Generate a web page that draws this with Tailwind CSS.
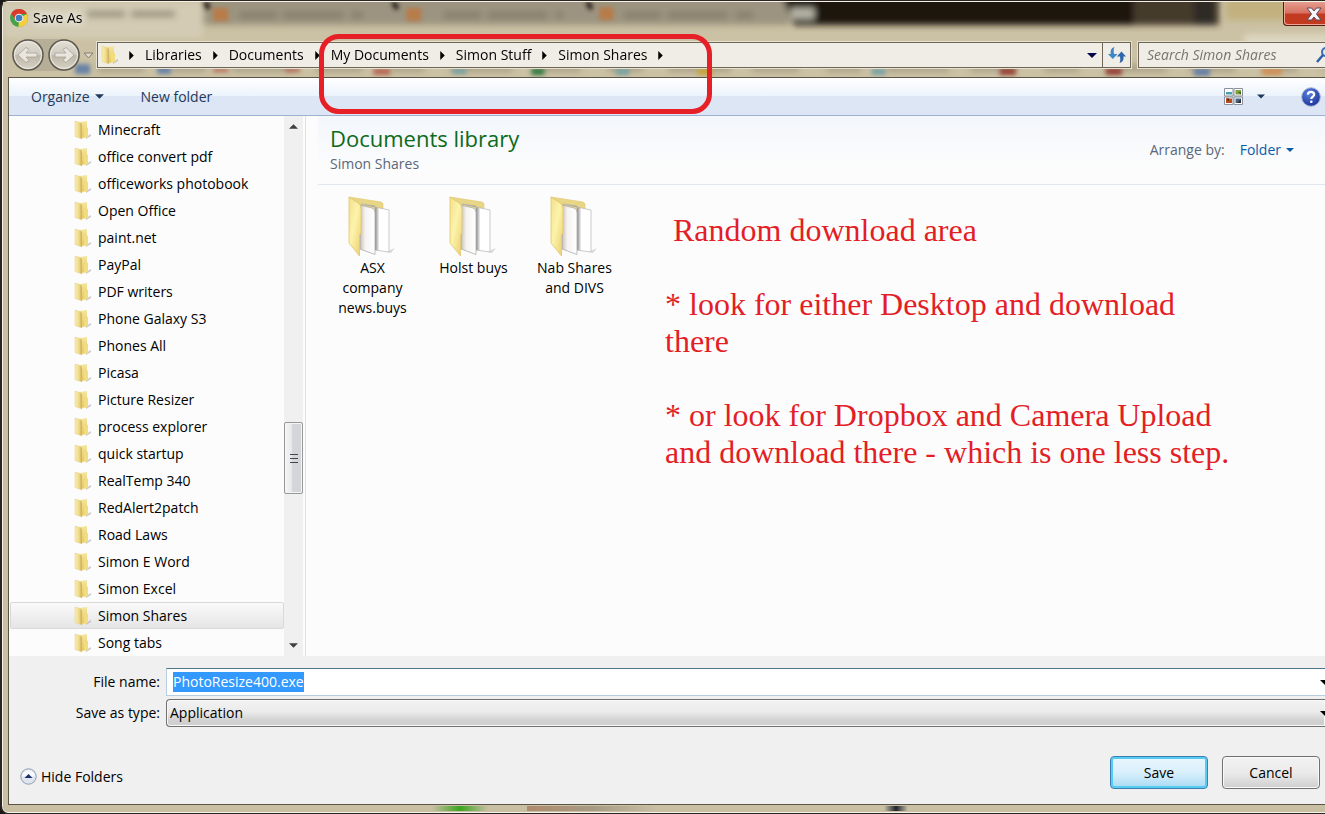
<!DOCTYPE html>
<html lang="en">
<head>
    <meta charset="UTF-8">
    <meta name="viewport" content="width=device-width, initial-scale=1.0">
    <title>Save As</title>
    <script src="https://cdn.jsdelivr.net/npm/@tailwindcss/browser@4"></script>
</head>
<body class="overflow-hidden bg-[#1b1815] font-['Open_Sans','Noto_Sans',sans-serif] text-sm text-black">

    <!-- Shared icons -->
    <svg class="absolute size-0" aria-hidden="true">
        <defs>
            <linearGradient id="fold-front" x1="0" y1="0" x2="1" y2="0">
                <stop offset="0" stop-color="#f9eeb0"/><stop offset=".6" stop-color="#eed989"/><stop offset="1" stop-color="#c3a54b"/>
            </linearGradient>
            <linearGradient id="fold-back" x1="0" y1="0" x2="0" y2="1">
                <stop offset="0" stop-color="#f4e6a0"/><stop offset="1" stop-color="#e6c85c"/>
            </linearGradient>
            <linearGradient id="big-front" x1="0" y1="0" x2="1" y2="1">
                <stop offset="0" stop-color="#f3e08c"/><stop offset=".45" stop-color="#fcf3ab"/><stop offset="1" stop-color="#ebcd6b"/>
            </linearGradient>
            <linearGradient id="paper" x1="0" y1="0" x2="1" y2="0">
                <stop offset="0" stop-color="#c9c0b4"/><stop offset=".35" stop-color="#f5f3f1"/><stop offset="1" stop-color="#fff"/>
            </linearGradient>
            <linearGradient id="paper-back" x1="0" y1="0" x2="1" y2="0">
                <stop offset=".48" stop-color="#777"/><stop offset=".66" stop-color="#fff"/>
            </linearGradient>
            <linearGradient id="nav" x1="0" y1="0" x2="0" y2="1">
                <stop offset="0" stop-color="#e4e0d6"/><stop offset=".5" stop-color="#cfcabf"/><stop offset=".52" stop-color="#bdb7a9"/><stop offset="1" stop-color="#d8d3c6"/>
            </linearGradient>
            <radialGradient id="help" cx=".4" cy=".3" r=".8">
                <stop offset="0" stop-color="#5b83e0"/><stop offset="1" stop-color="#142a90"/>
            </radialGradient>
            <filter id="blur" x="-5%" y="-30%" width="110%" height="160%"><feGaussianBlur stdDeviation="3"/></filter>
            <filter id="soft"><feGaussianBlur stdDeviation="2"/></filter>
        </defs>
        <symbol id="folder" viewBox="0 0 18 20">
            <path d="M12 17L17 14L17 16L12 19Z" fill="#aaa" opacity=".6"/>
            <path d="M6 2L13 1V17L6 18Z" fill="url(#fold-back)"/>
            <path d="M10 9L13 7.500L14 8V17L10 18Z" fill="#f3dc7d"/>
            <path d="M1 1L6 2.500Q8 3 8 5V19L1 16.500Z" fill="url(#fold-front)" stroke="#e5cf80" stroke-width=".5"/>
        </symbol>
        <symbol id="folder-open" viewBox="0 0 50 62">
            <path d="M38 56L47 52L43 57Z" fill="#999" opacity=".35"/>
            <path d="M1 1L33 6Q35 6.500 35 9V30H10Z" fill="#e9d685" stroke="#dcc46c" stroke-width=".6"/>
            <path d="M13 8L41 14V56L27 54V10Z" fill="url(#paper-back)" stroke="#b5b5b5" stroke-width=".7"/>
            <path d="M12 9L24 12Q27 13 27 17V58.500L12 53Z" fill="url(#paper)" stroke="#a5a5a5" stroke-width=".7"/>
            <path d="M1 1L10 7Q13 9 13 13V37L11.500 39V60L1 47Z" fill="url(#big-front)" stroke="#dfc66c" stroke-width=".8"/>
        </symbol>
        <symbol id="right" viewBox="0 0 5 10"><path d="M0 0V10L5 5Z"/></symbol>
        <symbol id="down" viewBox="0 0 10 5"><path d="M0 0H10L5 5Z"/></symbol>
    </svg>

    <div class="relative flex min-h-screen w-full flex-col rounded-l-lg border-y border-l-2 border-[#2b2620] bg-[#c9bfa3] pt-px pb-2 shadow-[inset_1px_1px_0_#f4f1ea,inset_0_-1px_0_#f4f1ea]">

        <!-- Blurred browser behind the glass frame -->
        <svg class="absolute top-px left-px h-[75px] w-full" viewBox="0 0 1322 75" preserveAspectRatio="xMinYMin slice" aria-hidden="true">
            <rect width="1322" height="75" fill="#cbc1a4"/>
            <g filter="url(#blur)">
                <rect x="200" y="-12" width="586" height="35" fill="#9c9480"/>
                <path d="M776 -12H1130V23H790Z" fill="#1e190f"/>
                <rect x="1130" y="-12" width="85" height="35" fill="#443b2a"/>
                <rect x="1190" y="-12" width="20" height="35" fill="#2f2b26"/>
                <rect x="1222" y="-6" width="60" height="24" fill="#c2b17f"/>
                <rect x="787" y="6" width="24" height="11" fill="#b5b2a4"/>
                <rect x="0" y="0" width="200" height="36" fill="#d3cbb4"/>
                <path d="M1240 40H1330" stroke="#ddd6c0" stroke-width="16"/>
                <path d="M84 12H172M236 13H360M440 13H560M620 13H750" stroke="#7c7462" stroke-width="7" stroke-dasharray="38 6 60 8" opacity=".6"/>
                <path d="M95 66H1322" stroke="#a39a82" stroke-width="6" stroke-dasharray="46 28 34 26 62 22"/>
            </g>
            <g filter="url(#soft)">
                <path d="M202 0L206 7M390 0L394 7M584 0L588 7" stroke="#2a241a" stroke-width="5"/>
                <g fill="#b87c48"><rect x="210" y="6" width="15" height="13"/><rect x="403" y="6" width="15" height="13"/><rect x="596" y="5" width="14" height="13"/></g>
                <g fill="#6982a6"><rect x="72" y="62" width="15" height="10"/><rect x="154" y="64" width="14" height="8"/><rect x="1190" y="66" width="16" height="8"/></g>
                <g fill="#b56b56"><rect x="210" y="66" width="15" height="4"/><rect x="282" y="66" width="15" height="4"/><rect x="370" y="66" width="17" height="7"/></g>
                <g fill="#984339"><rect x="996" y="66" width="16" height="7"/><rect x="1102" y="66" width="16" height="7"/></g>
                <g fill="#79a2a2"><rect x="449" y="66" width="14" height="6"/><rect x="612" y="66" width="14" height="7"/><rect x="868" y="66" width="14" height="7"/></g>
                <rect x="528" y="66" width="13" height="7" fill="#357a45"/>
                <rect x="694" y="66" width="15" height="7" fill="#c6a43b"/>
                <rect x="1258" y="66" width="20" height="7" fill="#cf9056"/>
            </g>
        </svg>

        <!-- Title bar -->
        <header class="relative flex h-8 items-center gap-1 pl-[7px]">
            <svg class="size-5" viewBox="0 0 20 20" aria-hidden="true">
                <circle cx="10" cy="10" r="9" fill="#46a247"/>
                <path d="M10 10L18 6A9 9 0 0 1 9.500 19Z" fill="#f6cf3a"/>
                <path d="M2.200 5.500A9 9 0 0 1 18 6H10L6.500 12Z" fill="#da3a2b"/>
                <circle cx="10" cy="10" r="4.300" fill="#f2f2ec"/>
                <circle cx="10" cy="10" r="3.300" fill="#3f7cc0"/>
            </svg>
            <h1 class="[text-shadow:0_0_8px_#fff,0_0_8px_#fff]">Save As</h1>
            <button class="ml-auto flex h-6 w-[42px] items-center self-start rounded-bl border-b border-l border-[#5b1a12] bg-linear-to-b from-[#e59d8f] from-0% via-[#d67060] via-48% to-[#c23a20] to-52% pl-5 shadow-[inset_1px_-1px_0_#eda797]" aria-label="Close">
                <svg class="h-4 w-5 shrink-0" viewBox="0 0 20 16"><path d="M3 2H7.500L10 5L12.500 2H17L12.500 8L17 14H12.500L10 11L7.500 14H3L7.500 8Z" fill="#f5f5fa" stroke="#5c4a58"/></svg>
            </button>
        </header>

        <!-- Address bar -->
        <nav class="relative mt-1 mb-[5px] flex h-[34px] items-center pl-2.5" aria-label="Address">
            <div class="flex h-8 items-center gap-1 rounded-full bg-[#a8a190]/60">
                <button aria-label="Back">
                    <svg class="size-8" viewBox="0 0 32 32"><circle cx="16" cy="16" r="15" fill="url(#nav)" stroke="#5f5a50" stroke-width="1.500"/><circle cx="16" cy="16" r="13.500" fill="none" stroke="#eeebe3"/><path d="M6 16L14 8.500L17 10.500L14 14H25V18H14L17 21.500L14 23.500Z" fill="#e9e6df" stroke="#a8a294" stroke-width=".8"/></svg>
                </button>
                <button aria-label="Forward">
                    <svg class="size-8" viewBox="0 0 32 32"><circle cx="16" cy="16" r="15" fill="url(#nav)" stroke="#5f5a50" stroke-width="1.500"/><circle cx="16" cy="16" r="13.500" fill="none" stroke="#eeebe3"/><path d="M26 16L18 8.500L15 10.500L18 14H7V18H18L15 21.500L18 23.500Z" fill="#e9e6df" stroke="#a8a294" stroke-width=".8"/></svg>
                </button>
            </div>
            <button class="mx-[3px]" aria-label="Recent locations"><svg class="h-[7px] w-[11px]" viewBox="0 0 11 7"><path d="M1 1H10L5.500 6Z" fill="#dedace" stroke="#857e6e"/></svg></button>
            <div class="flex h-[26px] min-w-0 flex-1 items-center border border-[#6e6758] bg-[#f0ede7] pl-[3px] shadow-[0_0_0_1px_#e6e0d0]">
                <svg class="mr-[7px] h-5 w-[18px] shrink-0"><use href="#folder"/></svg>
                <ol class="flex flex-1 items-center whitespace-nowrap">
                    <li class="flex items-center"><svg class="mx-[3px] h-[9px] w-[5px]"><use href="#right"/></svg></li>
                    <li class="flex items-center"><a href="#" class="px-2">Libraries</a><svg class="mx-[3px] h-[9px] w-[5px]"><use href="#right"/></svg></li>
                    <li class="flex items-center"><a href="#" class="px-2">Documents</a><svg class="mx-[3px] h-[9px] w-[5px]"><use href="#right"/></svg></li>
                    <li class="flex items-center"><a href="#" class="px-2">My Documents</a><svg class="mx-[3px] h-[9px] w-[5px]"><use href="#right"/></svg></li>
                    <li class="flex items-center"><a href="#" class="px-2">Simon Stuff</a><svg class="mx-[3px] h-[9px] w-[5px]"><use href="#right"/></svg></li>
                    <li class="flex items-center"><a href="#" class="px-2">Simon Shares</a><svg class="mx-[3px] h-[9px] w-[5px]"><use href="#right"/></svg></li>
                </ol>
                <button class="px-[5px]" aria-label="Previous locations"><svg class="h-[5px] w-[10px] fill-[#05054a]"><use href="#down"/></svg></button>
                <button class="flex h-full w-7 items-center justify-center border-l border-[#6e6758]" aria-label="Refresh">
                    <svg class="h-4 w-[18px]" viewBox="0 0 18 16" fill="#3d86c8"><path d="M6.500 0C3 1 2.300 4 2.800 7H0L4.800 12L9.500 7H6C5.600 4 5.500 2 6.500 0Z"/><path d="M11.500 16C15 15 15.900 12.500 15.400 9.500H18L13.500 4.500L8.800 9.500H12C12.400 12 12.500 14 11.500 16Z" fill="#2e67ac"/></svg>
                </button>
            </div>
            <div class="ml-[7px] flex h-[26px] w-[187px] items-center overflow-hidden border border-r-0 border-[#6e6758] bg-[#f0ede7] shadow-[0_0_0_1px_#e6e0d0]">
                <input type="search" aria-label="Search Simon Shares" placeholder="Search Simon Shares" class="w-[168px] shrink-0 pl-2 italic outline-none placeholder:text-[#77746f]">
                <svg class="ml-[9px] h-4 w-4 shrink-0" viewBox="0 0 16 16" fill="none" aria-hidden="true"><circle cx="10" cy="5" r="4" stroke="#3d6fb4" stroke-width="2"/><path d="M7 8L1 15" stroke="#2f5fa8" stroke-width="2.500"/></svg>
            </div>
        </nav>

        <div class="relative ml-1.5 flex flex-1 flex-col border-y border-l border-[#5b5548] bg-[#f0f0f0]">

            <!-- Toolbar -->
            <div class="flex h-[38px] items-center border-b border-[#9fb1d0] bg-linear-to-b from-white from-0% via-[#ebf3fb] via-50% to-[#dce6f4] to-50% pr-1 pl-[22px] text-[#1e395b]">
                <button class="flex items-center gap-[5px]">Organize <svg class="h-[5px] w-[9px] fill-[#1e395b]"><use href="#down"/></svg></button>
                <button class="ml-[37px]">New folder</button>
                <button class="ml-auto flex items-center gap-3.5" aria-label="Change your view">
                    <svg class="h-[17px] w-[19px]" viewBox="0 0 19 17"><g fill="#fff" stroke="#8a929c"><path d="M.5.5H9V8H.5ZM10 .5H18.500V8H10ZM.5 9H9V16.500H.5ZM10 9H18.500V16.500H10Z"/></g><path d="M2 4H8V6.500H2Z" fill="#46a2ae"/><path d="M11.500 2H17V6.500H11.500Z" fill="#7fa23c"/><path d="M14 4H17V6.500Z" fill="#3b5628"/><path d="M2 10.500H8V15H2Z" fill="#b64c1f"/><path d="M2 10.500H5V13Z" fill="#571b10"/><path d="M11.500 10.500H17V15H11.500Z" fill="#46668f"/><path d="M13 15L17 11V15Z" fill="#342e2c"/></svg>
                    <svg class="h-[5px] w-2 fill-[#1e395b]"><use href="#down"/></svg>
                </button>
                <button class="ml-9" aria-label="Get help">
                    <svg class="size-5" viewBox="0 0 20 20"><circle cx="10" cy="10" r="9.300" fill="url(#help)" stroke="#a9b7db"/><path d="M6.800 7.600Q7 4.800 10 4.800T13.200 7.500C13.200 9.500 10.300 9.600 10.300 12" fill="none" stroke="#fff" stroke-width="2.200"/><circle cx="10.300" cy="14.800" r="1.300" fill="#fff"/></svg>
                </button>
            </div>

            <div class="flex bg-[#fcfcfc]">
                <!-- Folder tree -->
                <ul id="tree" class="w-[275px] shrink-0"></ul>
                <div class="flex w-[19px] shrink-0 flex-col items-center bg-[#f0f0f0] py-2" aria-hidden="true">
                    <svg class="h-[5px] w-[9px] rotate-180 fill-[#404040]"><use href="#down"/></svg>
                    <div class="mt-[293px] flex h-[72px] w-[19px] flex-col items-center justify-center gap-[3px] rounded-xs border border-[#979797] bg-linear-to-r from-[#f7f7f7] from-0% via-[#e6e7e9] via-40% to-[#d3d5d9] to-45% shadow-[inset_0_0_0_1px_#f5f5f5]">
                        <div class="h-px w-2 bg-[#454545]"></div>
                        <div class="h-px w-2 bg-[#454545]"></div>
                        <div class="h-px w-2 bg-[#454545]"></div>
                    </div>
                    <svg class="mt-auto h-[5px] w-[9px] fill-[#404040]"><use href="#down"/></svg>
                </div>

                <!-- Library contents -->
                <main class="relative ml-0.5 min-w-0 flex-1 border-l border-[#d5e3ef]">
                    <div class="ml-3 flex h-[69px] justify-between border-b border-[#e1e6f2] bg-linear-to-b from-[#f3f7fc] to-[#fcfcfc] to-80% pr-[31px] pl-3">
                        <div class="pt-2">
                            <h2 class="text-[22px] leading-7 text-[#0b6b1b]">Documents library</h2>
                            <p class="mt-0.5 leading-5 text-[#5a6779]">Simon Shares</p>
                        </div>
                        <div class="flex items-center gap-[15px] text-[#5a6779]">
                            <span>Arrange by:</span>
                            <button class="flex items-center gap-[5px] text-[#0b5aa8]">Folder <svg class="h-1 w-2 fill-[#0b5aa8]"><use href="#down"/></svg></button>
                        </div>
                    </div>
                    <ul id="files" class="flex pt-[11px] pl-4"></ul>

                    <div class="absolute top-24 left-[359px] font-['Liberation_Serif',serif] text-[32px] leading-[37px] whitespace-nowrap text-[#e31e26]">
                        <p class="pl-2">Random download area</p>
                        <p class="mt-[37px]">* look for either Desktop and download<br>there</p>
                        <p class="mt-[37px]">* or look for Dropbox and Camera Upload<br>and download there - which is one less step.</p>
                    </div>
                </main>
            </div>

            <!-- File name and type -->
            <form class="flex flex-1 flex-col pt-3">
                <div class="flex h-7 items-center">
                    <label for="filename" class="w-[151px] text-right">File name:</label>
                    <div class="ml-1.5 flex h-7 flex-1 items-center overflow-hidden border border-r-0 border-[#b5cfe0] border-t-[#4f7488] bg-white pl-1.5">
                        <input id="filename" type="text" value="PhotoResize400.exe" class="field-sizing-content h-5 bg-[#3399ff] text-white outline-none">
                        <svg class="-mr-[5px] ml-auto h-[5px] w-[10px] shrink-0" aria-hidden="true"><use href="#down"/></svg>
                    </div>
                </div>
                <div class="mt-[3px] flex h-7 items-center">
                    <label for="filetype" class="w-[151px] text-right">Save as type:</label>
                    <div class="ml-1.5 flex h-7 flex-1 items-center overflow-hidden rounded-l-sm border border-r-0 border-[#707070] bg-linear-to-b from-[#f2f2f2] from-0% via-[#ebebeb] via-45% to-[#d0d0d0] to-80% shadow-[inset_0_0_0_1px_#f8f8f8]">
                        <select id="filetype" class="flex-1 appearance-none pl-[3px] outline-none"><option>Application</option></select>
                        <svg class="-mr-[5px] h-[5px] w-[10px] shrink-0" aria-hidden="true"><use href="#down"/></svg>
                    </div>
                </div>
                <div class="mt-[29px] flex items-center gap-3.5 pr-[5px] pl-[11px]">
                    <button type="button" class="mt-2 mr-auto flex items-center gap-1">
                        <svg class="size-[17px]" viewBox="0 0 17 17"><circle cx="8.500" cy="8.500" r="7.700" fill="#dfe5ef" stroke="#8f9bb0"/><path d="M2 8.500A6.500 6.500 0 0 1 15 8.500Z" fill="#f7f9fc"/><path d="M4.500 10L8.500 6L12.500 10Z" fill="#1c2f66"/></svg>
                        Hide Folders
                    </button>
                    <button type="button" class="h-[33px] w-[98px] rounded border border-[#3c7fb1] bg-linear-to-b from-[#eaf6fd] from-0% via-[#d9f0fc] via-50% to-[#a9d9f3] to-100% shadow-[inset_0_0_0_2px_#56ccf2]">Save</button>
                    <button type="button" class="h-[33px] w-[98px] rounded border border-[#707070] bg-linear-to-b from-[#f2f2f2] from-0% via-[#ebebeb] via-50% to-[#cfcfcf] to-100% shadow-[inset_0_0_0_1px_#fafafa]">Cancel</button>
                </div>
            </form>
        </div>

        <!-- Desktop colours seen through the bottom edge -->
        <div class="absolute bottom-0.5 left-[430px] h-[5px] w-14 bg-linear-to-r from-transparent via-[#3ba51f] to-transparent"></div>
        <div class="absolute bottom-0.5 left-[525px] h-[5px] w-[130px] bg-linear-to-r from-[#b08a6d] via-[#a59b84] to-transparent"></div>
        <div class="absolute bottom-0.5 left-[882px] h-[5px] w-6 bg-linear-to-r from-transparent via-[#20222f] to-transparent"></div>
    </div>

    <!-- Highlight around the folder path -->
    <div class="pointer-events-none absolute top-[34px] left-[319px] h-20 w-[393px] rounded-[20px] border-5 border-[#e71f27]"></div>

    <script>
        const folders = [
            'Minecraft', 'office convert pdf', 'officeworks photobook', 'Open Office', 'paint.net',
            'PayPal', 'PDF writers', 'Phone Galaxy S3', 'Phones All', 'Picasa', 'Picture Resizer',
            'process explorer', 'quick startup', 'RealTemp 340', 'RedAlert2patch', 'Road Laws',
            'Simon E Word', 'Simon Excel', 'Simon Shares', 'Song tabs'
        ];
        const files = ['ASX company news.buys', 'Holst buys', 'Nab Shares and DIVS'];

        document.getElementById('tree').innerHTML = folders.map(name => {
            const state = name === 'Simon Shares'
                ? 'border-[#d9d9d9] bg-linear-to-b from-[#fafafa] to-[#e5e5e5]'
                : 'border-transparent';
            return `
                <li class="flex h-[27px] items-center gap-1.5 rounded-xs border pl-[63px] ml-px ${state}">
                    <svg class="h-5 w-[18px]"><use href="#folder"/></svg>
                    <a href="#">${name}</a>
                </li>
            `;
        }).join('');

        document.getElementById('files').innerHTML = files.map(name => `
            <li class="w-[101px] px-3 text-center leading-5">
                <svg class="mx-auto h-[62px] w-[50px]"><use href="#folder-open"/></svg>
                <a href="#">${name}</a>
            </li>
        `).join('');
    </script>
</body>
</html>
